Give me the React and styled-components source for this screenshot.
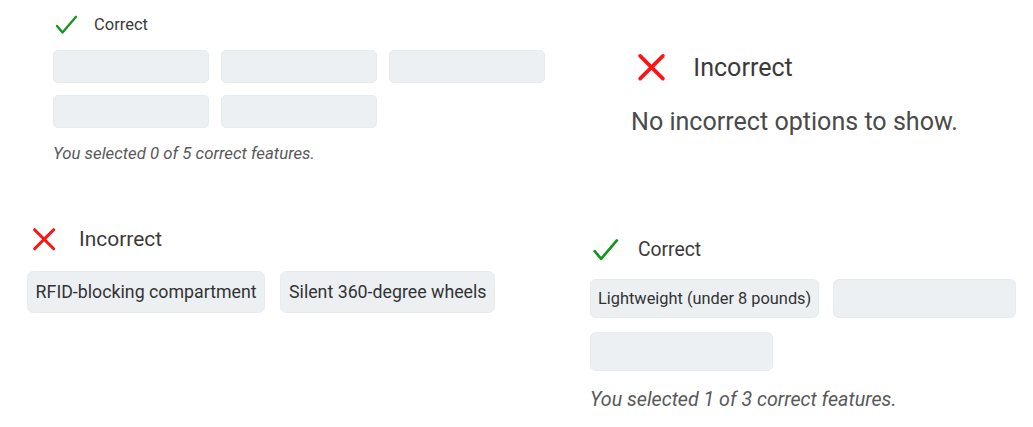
import React from "react";
import styled, { createGlobalStyle } from "styled-components";

const GlobalStyle = createGlobalStyle`
  html, body {
    margin: 0;
    padding: 0;
    background: #ffffff;
  }
  body {
    font-family: Roboto, "Liberation Sans", Arial, sans-serif;
    color: #333333;
  }
`;

const s = (n) => `calc(${n}px * var(--s))`;

function CheckIcon() {
  return (
    <Icon viewBox="0 0 26 24">
      <polyline
        points="4,13 9.5,19.5 23,3.8"
        fill="none"
        stroke="#16941f"
        strokeWidth="2.3"
        strokeLinecap="round"
        strokeLinejoin="round"
      />
    </Icon>
  );
}

function CrossIcon() {
  return (
    <Icon viewBox="0 0 26 24">
      <g stroke="#ff1212" strokeWidth="2.4" strokeLinecap="round">
        <line x1="6" y1="4.5" x2="21" y2="19.5" />
        <line x1="21" y1="4.5" x2="6" y2="19.5" />
      </g>
    </Icon>
  );
}

function ResultPanel({ scale, pad, correct, options, emptyText, caption }) {
  return (
    <Cell $pad={pad}>
      <Panel $scale={scale}>
        <Header>
          {correct ? <CheckIcon /> : <CrossIcon />}
          <Title>{correct ? "Correct" : "Incorrect"}</Title>
        </Header>
        {options && options.length ? (
          <Chips>
            {options.map((o, i) => (
              <Chip key={i}>{o}</Chip>
            ))}
          </Chips>
        ) : (
          <Empty>{emptyText}</Empty>
        )}
        {caption && <Caption>{caption}</Caption>}
      </Panel>
    </Cell>
  );
}

export default function App() {
  return (
    <>
      <GlobalStyle />
      <Board>
        <ResultPanel
          scale={1}
          pad="13px 0 0 53px"
          correct
          options={["", "", "", "", ""]}
          caption="You selected 0 of 5 correct features."
        />
        <ResultPanel
          scale={1.52}
          pad="49px 0 0 41px"
          correct={false}
          emptyText="No incorrect options to show."
        />
        <ResultPanel
          scale={1.27}
          pad="12px 0 0 27px"
          correct={false}
          options={["RFID-blocking compartment", "Silent 360-degree wheels"]}
        />
        <ResultPanel
          scale={1.17}
          pad="24px 0 0 0"
          correct
          options={["Lightweight (under 8 pounds)", "", ""]}
          caption="You selected 1 of 3 correct features."
        />
      </Board>
    </>
  );
}

const Board = styled.div`
  display: grid;
  grid-template-columns: 590px 1fr;
  grid-template-rows: 212px auto;
  width: 1033px;
  height: 427px;
  overflow: hidden;
`;

const Cell = styled.div`
  padding: ${(p) => p.$pad};
`;

const Panel = styled.section`
  --s: ${(p) => p.$scale};
  display: flex;
  flex-direction: column;
  align-items: flex-start;
`;

const Header = styled.div`
  display: flex;
  align-items: center;
  height: ${s(24)};
  gap: ${s(15)};
`;

const Icon = styled.svg`
  width: ${s(26)};
  height: ${s(24)};
  flex: none;
`;

const Title = styled.span`
  font-size: ${s(16.5)};
  color: #3a3a3a;
  line-height: 1;
`;

const Chips = styled.div`
  display: flex;
  flex-wrap: wrap;
  gap: ${s(12)};
  max-width: ${s(492)};
  margin-top: ${s(13)};
`;

const Chip = styled.div`
  box-sizing: border-box;
  display: flex;
  align-items: center;
  min-width: ${s(156)};
  height: ${s(33)};
  padding: 0 ${s(6)};
  border-radius: ${s(5)};
  background: #edf0f3;
  border: 1px solid #e8ebee;
  font-size: ${s(14)};
  color: #333333;
  white-space: nowrap;
`;

const Caption = styled.p`
  margin: ${s(14)} 0 0;
  font-size: ${s(16.8)};
  line-height: ${s(22)};
  font-style: italic;
  color: #595959;
`;

const Empty = styled.p`
  margin: ${s(14)} 0 0;
  font-size: ${s(16.5)};
  line-height: 1.2;
  color: #4a4a4a;
`;
